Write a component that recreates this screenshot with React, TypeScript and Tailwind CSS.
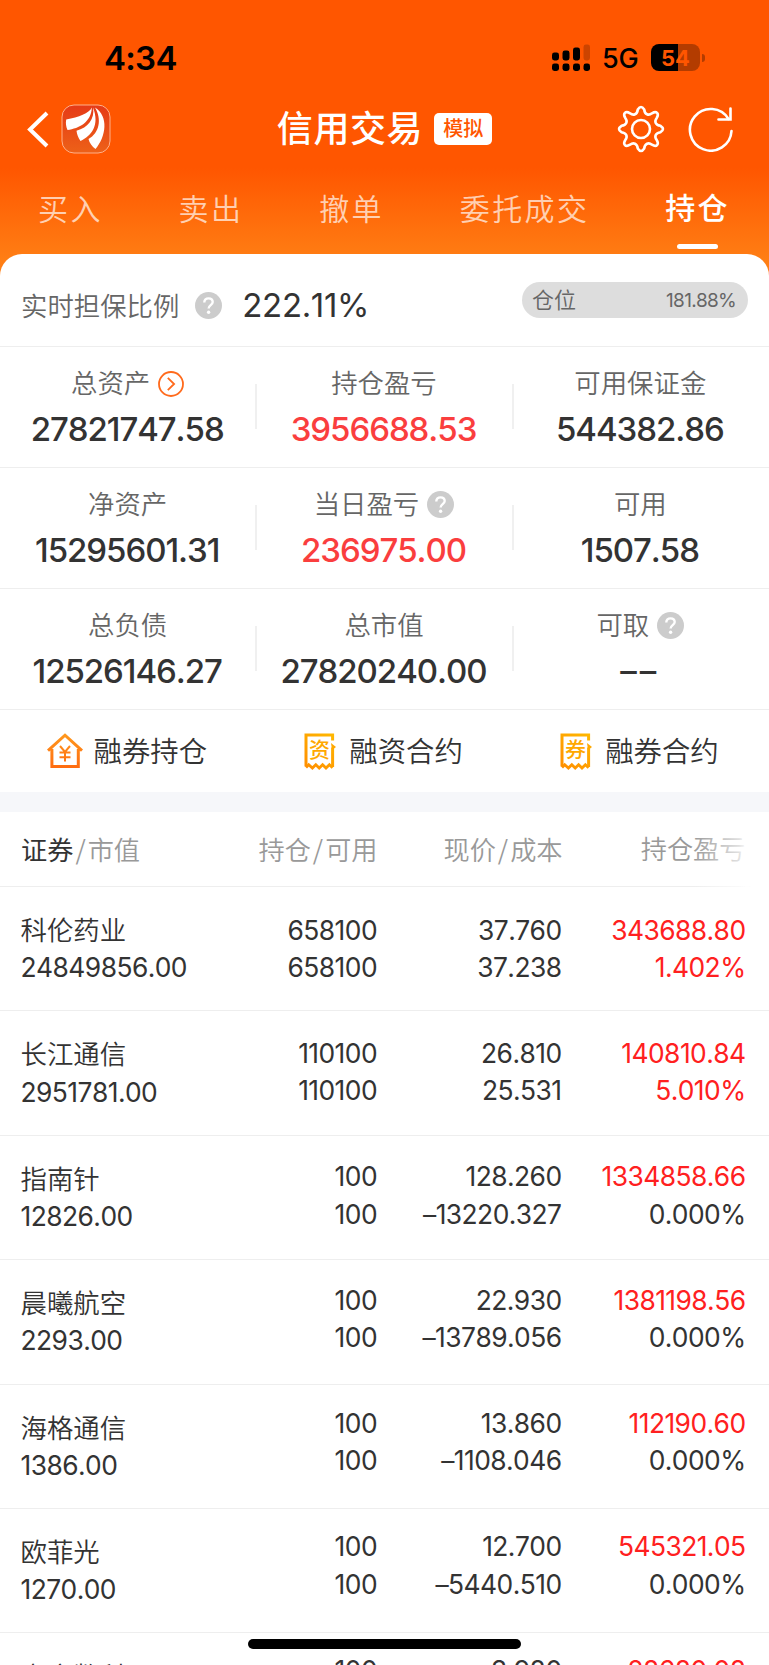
import React from 'react';

const summaryRows = [
  [
    { label: '总资产', value: '27821747.58', icon: 'arrow' },
    { label: '持仓盈亏', value: '3956688.53', red: true },
    { label: '可用保证金', value: '544382.86' },
  ],
  [
    { label: '净资产', value: '15295601.31' },
    { label: '当日盈亏', value: '236975.00', red: true, icon: 'help' },
    { label: '可用', value: '1507.58' },
  ],
  [
    { label: '总负债', value: '12526146.27' },
    { label: '总市值', value: '27820240.00' },
    { label: '可取', value: '––', icon: 'help' },
  ],
];

const holdings = [
  { name: '科伦药业', market: '24849856.00', qty: '658100', price: '37.760', cost: '37.238', profit: '343688.80', rate: '1.402%' },
  { name: '长江通信', market: '2951781.00', qty: '110100', price: '26.810', cost: '25.531', profit: '140810.84', rate: '5.010%' },
  { name: '指南针', market: '12826.00', qty: '100', price: '128.260', cost: '–13220.327', profit: '1334858.66', rate: '0.000%' },
  { name: '晨曦航空', market: '2293.00', qty: '100', price: '22.930', cost: '–13789.056', profit: '1381198.56', rate: '0.000%' },
  { name: '海格通信', market: '1386.00', qty: '100', price: '13.860', cost: '–1108.046', profit: '112190.60', rate: '0.000%' },
  { name: '欧菲光', market: '1270.00', qty: '100', price: '12.700', cost: '–5440.510', profit: '545321.05', rate: '0.000%' },
];

// only the top edge of this row is on screen
const nextHolding = { name: '立方数科', qty: '100', price: '3.980', profit: '28680.08' };

const HelpIcon = () => (
  <svg width="27" height="27" viewBox="0 0 27 27" fill="none" className="shrink-0">
    <circle cx="13.5" cy="13.5" r="13.5" fill="#ccc" />
    <path d="M9.3 10.4C9.3 7.9 11 6.4 13.5 6.4s4.2 1.5 4.2 3.7c0 3-4.1 3.1-4.1 6.3" stroke="#fff" strokeWidth="2.4" />
    <circle cx="13.6" cy="20.3" r="1.7" fill="#fff" />
  </svg>
);

const ArrowIcon = () => (
  <svg width="26" height="26" viewBox="0 0 26 26" fill="none" stroke="#ff6a1c" strokeWidth="1.8" className="shrink-0">
    <circle cx="13" cy="13" r="12" />
    <path d="M9.8 6.8l6.3 6.2-6.3 6.2" />
  </svg>
);

const HouseIcon = () => (
  <svg width="36" height="36" viewBox="0 0 36 36" fill="none" stroke="url(#house)" strokeWidth="3">
    <defs>
      <linearGradient id="house" gradientUnits="userSpaceOnUse" x1="0" y1="0" x2="0" y2="36">
        <stop offset="0" stopColor="#ff9a1e" />
        <stop offset="1" stopColor="#ff6a10" />
      </linearGradient>
    </defs>
    <path d="M1 17.6L18 2.2l17 15.4M4.9 16v17.5h26.4V16" />
    <path d="M13 13l5 6 5-6M12.5 19.6h11M12.5 24.2h11M18 19v9.5" strokeWidth="2" />
  </svg>
);

const BillIcon = ({ text }: { text: string }) => (
  <svg width="32" height="37" viewBox="0 0 32 37" fill="none" stroke="#ffa800" strokeWidth="3">
    <defs>
      <linearGradient id="bill" gradientUnits="userSpaceOnUse" x1="0" y1="37" x2="30" y2="0">
        <stop offset="0" stopColor="#ff8c00" />
        <stop offset="1" stopColor="#ffb900" />
      </linearGradient>
    </defs>
    <g stroke="url(#bill)">
      <path d="M28.6 7.5V2H2v31.5" />
      <path d="M28.6 34V14.5" />
      <path d="M2 34.5l2.7-2.8 3.7 3.3 3.4-3.3 3.4 3.3 3.4-3.3 3.4 3.3 3.4-3.3 3.2 3" strokeWidth="2.8" />
    </g>
    <path d="M27 10l5 4-4 3z" fill="#ffa800" stroke="none" />
    <text x="15.5" y="23.5" textAnchor="middle" fontSize="21" fontWeight="500" fill="#ffa800" stroke="none" fontFamily="'Noto Sans CJK SC', sans-serif">
      {text}
    </text>
  </svg>
);

const StatusBar = () => (
  <div className="flex h-[90px] items-start justify-between pt-[38px] pr-[64px] pl-[104px] text-black">
    <span className="text-[33px] leading-[40px] font-semibold tracking-[-0.7px]">4:34</span>
    <div className="flex h-[39px] items-center">
      <svg width="39" height="28" viewBox="0 0 39 28">
        <rect x="0" y="8.5" width="7" height="8" rx="2.4" />
        <rect x="10.5" y="6.5" width="7" height="10" rx="2.4" />
        <rect x="21" y="3.5" width="7" height="13" rx="2.4" />
        <rect x="31.5" y="0.5" width="6.5" height="16" rx="2.4" opacity="0.2" />
        <rect x="0" y="19.5" width="7" height="7.5" rx="2.4" />
        <rect x="10.5" y="19.5" width="7" height="7.5" rx="2.4" />
        <rect x="21" y="19.5" width="7" height="7.5" rx="2.4" />
        <rect x="31.5" y="19.5" width="6.5" height="7.5" rx="2.4" />
      </svg>
      <span className="ml-[11px] w-[38px] pt-px text-[27px] leading-[39px] font-medium tracking-[-0.2px]">5G</span>
      <div className="ml-[11px] flex h-[27px] w-[49px] items-center justify-center rounded-[8px] bg-[linear-gradient(90deg,#000_55%,#b33c00_55%)] text-[22px] leading-none font-bold text-[#ff5600]">
        54
      </div>
      <div className="ml-[2px] h-[8px] w-[3px] rounded-r-full bg-[#b33c00]"></div>
    </div>
  </div>
);

const TitleBar = () => (
  <div className="grid h-[78px] grid-cols-[1fr_auto_1fr] items-center">
    <div className="flex items-center pl-[27px]">
      <svg width="22" height="37" viewBox="0 0 22 37" fill="none" stroke="#fff" strokeWidth="4">
        <path d="M20 2L3 18.5 20 35" />
      </svg>
      <svg width="50" height="50" viewBox="0 0 50 50" className="ml-[12px]">
        <defs>
          <linearGradient id="logo" x1="0" y1="0" x2="0" y2="1">
            <stop offset="0" stopColor="#e53a17" />
            <stop offset="1" stopColor="#ed6118" />
          </linearGradient>
        </defs>
        <rect x="1" y="1" width="48" height="48" rx="12" fill="url(#logo)" stroke="#ffb08a" strokeWidth="1" />
        <g fill="#fff">
          <path d="M30.8 3.5C28 9.5 18 13 5.2 15.5C4.5 19 5 22.5 6.5 26C18 24.5 30.5 18 30.8 3.5Z" />
          <path d="M32 3.5C34 15 27 23.5 15.5 26.8C16 30.5 17.2 34 19.5 37C30.5 32 39 21 32 3.5Z" />
          <path d="M34 3.5C41 15 38.5 29 27.5 35C28.5 39 31 42.5 34.5 45C45 33 48 12 34 3.5Z" />
        </g>
      </svg>
    </div>
    <div className="flex items-center gap-[11px]">
      <h1 className="text-[36px] leading-none font-medium tracking-[0.6px] text-white">信用交易</h1>
      <span className="flex h-[32px] w-[58px] items-center justify-center rounded-[5px] bg-white text-[20px] leading-none font-medium text-[#ff5600]">
        模拟
      </span>
    </div>
    <div className="flex items-center justify-end gap-[23px] pr-[35px]">
      <svg width="48" height="48" viewBox="0 0 48 48" fill="none" stroke="#fff" strokeWidth="2.6" strokeLinejoin="round">
        <circle cx="24" cy="24" r="9" />
        <path d="M20.8 4.5Q24 -0.5 27.2 4.5C27.8 9.5 31.5 11 35 8.3C39.5 5.5 42.5 8.5 39.7 13C37 16.5 38.5 20.2 43.5 20.8Q48.5 24 43.5 27.2C38.5 27.8 37 31.5 39.7 35C42.5 39.5 39.5 42.5 35 39.7C31.5 37 27.8 38.5 27.2 43.5Q24 48.5 20.8 43.5C20.2 38.5 16.5 37 13 39.7C8.5 42.5 5.5 39.5 8.3 35C11 31.5 9.5 27.8 4.5 27.2Q-0.5 24 4.5 20.8C9.5 20.2 11 16.5 8.3 13C5.5 8.5 8.5 5.5 13 8.3C16.5 11 20.2 9.5 20.8 4.5Z" />
      </svg>
      <svg width="46" height="46" viewBox="0 0 46 46" fill="none" stroke="#fff" strokeWidth="2.6" strokeLinecap="round">
        <path d="M43.5 25A20.8 20.8 0 1 1 40.5 13" />
        <path d="M42.5 2.5V13.5H30.5" />
      </svg>
    </div>
  </div>
);

const Tabs = () => (
  <div className="flex h-[86px] items-start justify-between pr-[39px] pl-[38px] text-[30px] tracking-[2.4px] text-white/70">
    {['买入', '卖出', '撤单', '委托成交'].map((tab) => (
      <button key={tab} className="h-[82px] leading-[78px] font-[350]">{tab}</button>
    ))}
    <button className="flex h-[82px] flex-col items-center leading-[80px] font-medium text-white">
      <span className="h-[76px]">持仓</span>
      <span className="h-[5px] w-[41px] rounded-full bg-white"></span>
    </button>
  </div>
);

const Slash = () => <span className="mx-[2px] font-['Noto_Sans_CJK_SC']">/</span>;

const App = () => {
  return (
    <div className="relative h-[1665px] w-[769px] overflow-hidden bg-white font-[Inter,'Noto_Sans_CJK_SC',sans-serif] text-[#333] [font-kerning:none]">
      <div className="h-[280px] bg-[linear-gradient(180deg,#ff5600_0px,#ff5600_168px,#ff7e14_260px)]">
        <StatusBar />
        <TitleBar />
        <Tabs />
      </div>

      <section className="-mt-[26px] rounded-t-[22px] bg-white">
        <div className="flex h-[93px] items-center border-b border-[#eee] pr-[21px] pl-[21px]">
          <span className="mt-[12px] text-[26.4px] leading-none font-[350] text-[#666]">实时担保比例</span>
          <div className="mt-[10px] ml-[16px]">
            <HelpIcon />
          </div>
          <span className="mt-[10px] ml-[20px] text-[33px] leading-none tracking-[-0.35px]">222.11%</span>
          <div className="ml-auto flex h-[36px] w-[226px] items-center justify-between rounded-full bg-[#ddd] pr-[12px] pl-[10px] text-[#666]">
            <span className="text-[22px] leading-none font-[350]">仓位</span>
            <span className="text-[19px] leading-none tracking-[-0.7px]">181.88%</span>
          </div>
        </div>

        {summaryRows.map((row, i) => (
          <div key={i} className="flex h-[121px] items-center border-b border-[#eee]">
            {row.map((item, j) => (
              <div key={item.label} className="relative flex h-[121px] flex-1 flex-col items-center pt-[21px]">
                <div className="flex h-[32px] items-center gap-[8px] pr-px text-[26.4px] leading-none font-[350] text-[#666]">
                  {item.label}
                  {item.icon === 'arrow' && <ArrowIcon />}
                  {item.icon === 'help' && <HelpIcon />}
                </div>
                <div
                  className={`mt-[9px] pr-[2px] text-[33px] leading-[40px] font-medium ${item.value === '––' ? 'tracking-[3px]' : 'tracking-[-1.05px]'} ${item.red ? 'text-[#fa3e3e]' : ''}`}
                >
                  {item.value}
                </div>
                {j < 2 && <i className="absolute top-[37px] right-[-1px] h-[45px] w-[2px] bg-[#f0f0f0]"></i>}
              </div>
            ))}
          </div>
        ))}

        <div className="grid h-[82px] grid-cols-3 items-center text-[28.4px] leading-none font-[350]">
          <div className="flex items-center gap-[11px] pl-[46.5px]">
            <HouseIcon />
            <span className="pt-[2px]">融券持仓</span>
          </div>
          <div className="flex items-center gap-[13px] pl-[48px]">
            <BillIcon text="资" />
            <span className="pt-[2px]">融资合约</span>
          </div>
          <div className="flex items-center gap-[13px] pl-[47.5px]">
            <BillIcon text="券" />
            <span className="pt-[2px]">融券合约</span>
          </div>
        </div>
      </section>

      <div className="h-[20px] bg-[#f6f7fa]"></div>

      <section>
        <div className="relative grid h-[75px] grid-cols-[192px_185.5px_185px_183px] items-center border-b border-[#eee] pt-[2px] text-[26.2px] leading-none font-[350] text-[#999]">
          <div className="pl-[21px]">
            <span className="font-normal text-[#333]">证券</span>
            <Slash />
            市值
          </div>
          <div className="text-right">持仓<Slash />可用</div>
          <div className="text-right">现价<Slash />成本</div>
          <div className="text-right">持仓盈亏</div>
          <div className="absolute top-0 right-[20px] h-[75px] w-[56px] bg-linear-to-r from-white/0 to-white/85"></div>
          <div className="absolute top-0 right-0 h-[76px] w-[30px] bg-linear-to-r from-white/0 to-white to-40%"></div>
        </div>

        {holdings.map((row, i) => (
          <div key={row.name} className="grid h-[124.4px] grid-cols-[216px_161px_184.500px_184px] border-b border-[#eee] text-[26.4px] leading-[37.3px] tracking-[-0.55px]">
            <div className="pt-[25px] pl-[20.5px]">
              <div className="font-[350] tracking-normal">{row.name}</div>
              <div>{row.market}</div>
            </div>
            {/* the scrolling columns use a slightly smaller row pitch */}
            <div className="pt-[24.5px] text-right" style={{ marginTop: -i }}>
              <div>{row.qty}</div>
              <div>{row.qty}</div>
            </div>
            <div className="pt-[24.5px] text-right" style={{ marginTop: -i }}>
              <div>{row.price}</div>
              <div>{row.cost}</div>
            </div>
            <div className="pt-[24.5px] text-right text-[#ff2020]" style={{ marginTop: -i }}>
              <div>{row.profit}</div>
              <div className={row.rate === '0.000%' ? 'text-[#333]' : ''}>{row.rate}</div>
            </div>
          </div>
        ))}

        <div className="grid grid-cols-[216px_161px_184.500px_184px] text-[26.4px] leading-[37.3px] tracking-[-0.55px]">
          <div className="pt-[25px] pl-[20.5px] font-[350] tracking-normal">{nextHolding.name}</div>
          <div className="pt-[18.5px] text-right">{nextHolding.qty}</div>
          <div className="pt-[18.5px] text-right">{nextHolding.price}</div>
          <div className="pt-[18.5px] text-right text-[#ff2020]">{nextHolding.profit}</div>
        </div>
      </section>

      <div className="absolute bottom-[16px] left-[248px] h-[10px] w-[273px] rounded-full bg-black"></div>
    </div>
  );
};

export default App;
